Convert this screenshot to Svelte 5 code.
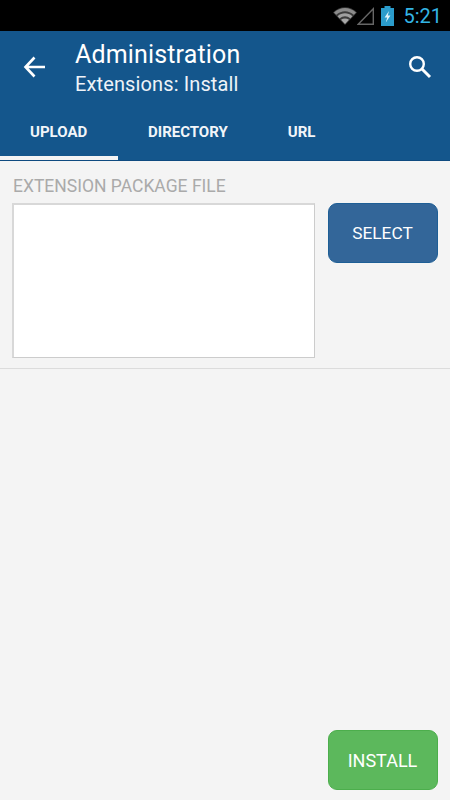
<script lang="ts">
  const tabs = [
    { label: 'UPLOAD', active: true },
    { label: 'DIRECTORY', active: false },
    { label: 'URL', active: false }
  ];
</script>

<div class="screen">
  <div class="status">
    <svg class="wifi" width="24" height="18" viewBox="0 0 24 18">
      <path d="M12 18 L0 5.5 C7 -1.5 17 -1.5 24 5.5 Z" fill="#3c3c3c" />
      <path d="M1 5.4 C7.5 -0.6 16.5 -0.6 23 5.4 L20.8 7.8 C15.5 3 8.5 3 3.2 7.8 Z" fill="#8c8c8c" />
      <path d="M4.6 9.2 C9 5.4 15 5.4 19.4 9.2 L17.4 11.4 C14 8.6 10 8.6 6.6 11.4 Z" fill="#a0a0a0" />
      <path d="M8 12.8 C10.5 11 13.5 11 16 12.8 L12 17 Z" fill="#a8a8a8" />
    </svg>
    <svg class="signal" width="17" height="18" viewBox="0 0 17 18">
      <path d="M1.2 17.3 L16.3 1.8 V17.3 Z" fill="none" stroke="#666" stroke-width="1.4" />
    </svg>
    <svg class="battery" width="13" height="20" viewBox="0 0 13 20">
      <path d="M3.5 0 H9.5 V2 H13 V20 H0 V2 H3.5 Z" fill="#2b9ccb" />
      <path d="M8 5 L3.6 11.5 H6.2 L4.8 16.5 L9.4 9.5 H6.8 Z" fill="#e3f4fa" />
    </svg>
    <span class="time">5:21</span>
  </div>

  <header class="appbar">
    <div class="titlebar">
      <svg class="back" width="24" height="24" viewBox="0 0 24 24">
        <path d="M22 12 H3.5 M11.5 2.5 L2.5 12 L11.5 21.5" fill="none" stroke="#fff" stroke-width="2.6" />
      </svg>
      <div class="titles">
        <div class="title">Administration</div>
        <div class="subtitle">Extensions: Install</div>
      </div>
      <svg class="search" width="24" height="24" viewBox="0 0 24 24">
        <circle cx="9" cy="9" r="6.8" fill="none" stroke="#fff" stroke-width="2.4" />
        <path d="M14 14 L22 22" fill="none" stroke="#fff" stroke-width="3" />
      </svg>
    </div>
    <nav class="tabs">
      {#each tabs as tab}
        <div class="tab" class:active={tab.active}>{tab.label}</div>
      {/each}
    </nav>
  </header>

  <main class="content">
    <section class="upload">
      <div class="field">
        <div class="label">EXTENSION PACKAGE FILE</div>
        <div class="filebox"></div>
      </div>
      <button class="btn select">SELECT</button>
    </section>
    <div class="footer">
      <button class="btn install">INSTALL</button>
    </div>
  </main>
</div>

<style>
  :global(body) {
    background: #f4f4f4;
  }

  .screen {
    width: 450px;
    height: 800px;
    display: flex;
    flex-direction: column;
    font-family: Roboto, sans-serif;
    background: #f4f4f4;
  }

  .status {
    height: 31px;
    background: #000;
    display: flex;
    align-items: center;
    justify-content: flex-end;
    padding-right: 8px;
    box-sizing: border-box;
  }

  .wifi {
    margin-top: 1px;
  }

  .signal {
    margin-top: 1px;
  }

  .battery {
    margin-left: 7px;
  }

  .time {
    color: #33b5e5;
    font-size: 20px;
    margin-left: 9px;
  }

  .appbar {
    background: #14568c;
    height: 130px;
    display: flex;
    flex-direction: column;
    border-bottom: 1px solid #0e4a80;
    box-sizing: border-box;
  }

  .titlebar {
    height: 69px;
    display: flex;
    align-items: center;
    padding: 0 18px 0 23px;
    color: #fff;
  }

  .back {
    flex: none;
    margin-top: 2px;
  }

  .titles {
    flex: 1;
    margin-left: 28px;
    margin-top: 6px;
  }

  .title {
    font-size: 25px;
    line-height: 30px;
    letter-spacing: 0.15px;
  }

  .subtitle {
    font-size: 20px;
    line-height: 28px;
    letter-spacing: 0.12px;
    color: #eef3f8;
  }

  .search {
    flex: none;
    margin-top: 2px;
  }

  .tabs {
    flex: 1;
    display: flex;
  }

  .tab {
    padding: 23px 30px 0;
    box-sizing: border-box;
    color: #f2f5f9;
    font-size: 15px;
    font-weight: 700;
  }

  .tab.active {
    width: 118px;
    border-bottom: 4px solid #f4f4f4;
  }

  .content {
    flex: 1;
    display: flex;
    flex-direction: column;
  }

  .upload {
    display: flex;
    align-items: flex-start;
    gap: 13px;
    padding: 16px 12px 10px 12px;
    border-bottom: 1px solid #dcdcdc;
  }

  .field {
    width: 303px;
  }

  .label {
    color: #aaa;
    font-size: 17.5px;
    line-height: 19px;
    margin-bottom: 7px;
    padding-left: 1px;
  }

  .filebox {
    height: 155px;
    background: #fff;
    border: 1px solid #ccc;
    border-left-width: 2px;
    border-top-width: 2px;
    border-left-color: #d8d8d8;
    border-top-color: #d8d8d8;
    box-sizing: border-box;
  }

  .btn {
    width: 110px;
    height: 60px;
    border-radius: 9px;
    color: #fff;
    font-family: inherit;
    font-size: 17.3px;
    padding: 0;
  }

  .select {
    margin-top: 26px;
    background: #336699;
    border: 1px solid #1e5f96;
    margin-left: -0.5px;
  }

  .footer {
    margin-top: auto;
    display: flex;
    justify-content: flex-end;
    padding: 0 12.5px 10px;
  }

  .install {
    background: #5cb85c;
    border: 1px solid #4cae4c;
    font-size: 18px;
  }
</style>
